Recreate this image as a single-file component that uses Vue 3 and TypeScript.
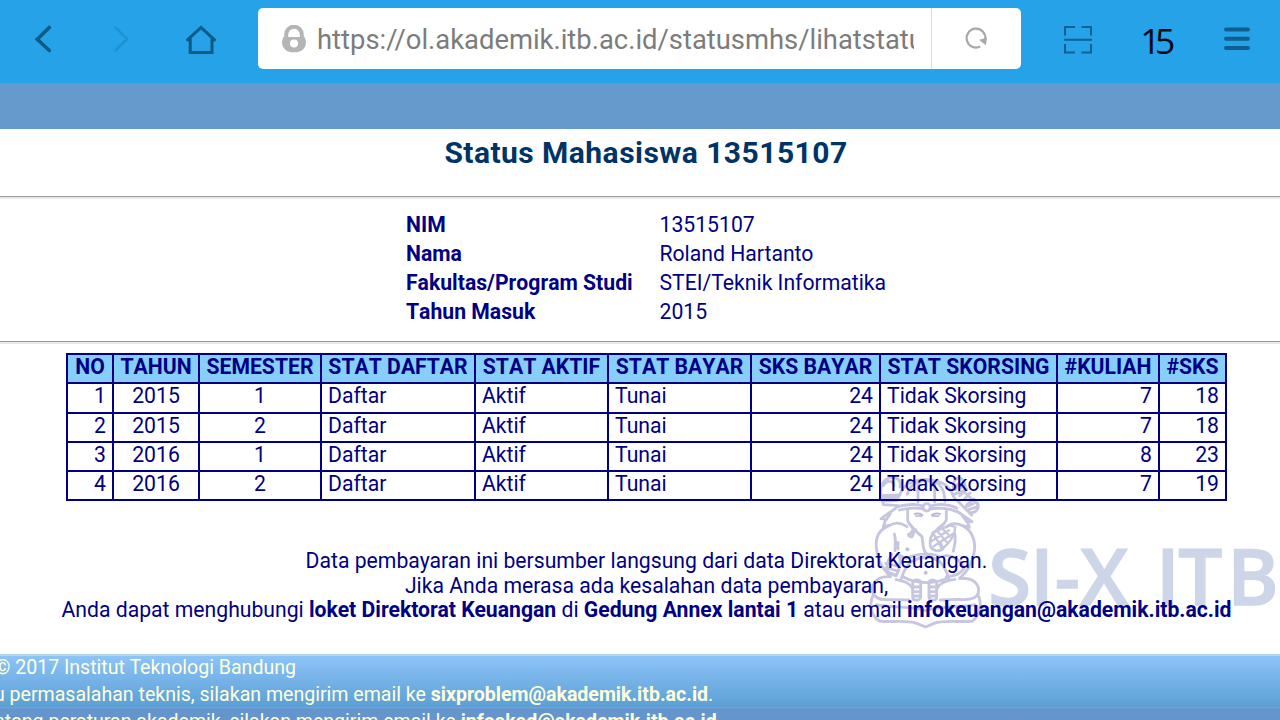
<script setup lang="ts">
interface Field {
  label: string
  value: string
}

interface Column {
  title: string
  kind: string
  align: string
}

const fields: Field[] = [
  { label: 'NIM', value: '13515107' },
  { label: 'Nama', value: 'Roland Hartanto' },
  { label: 'Fakultas/Program Studi', value: 'STEI/Teknik Informatika' },
  { label: 'Tahun Masuk', value: '2015' },
]

const columns: Column[] = [
  { title: 'NO', kind: 'no', align: 'right' },
  { title: 'TAHUN', kind: 'tahun', align: 'center' },
  { title: 'SEMESTER', kind: 'semester', align: 'center' },
  { title: 'STAT DAFTAR', kind: 'daftar', align: 'left' },
  { title: 'STAT AKTIF', kind: 'aktif', align: 'left' },
  { title: 'STAT BAYAR', kind: 'bayar', align: 'left' },
  { title: 'SKS BAYAR', kind: 'sks-bayar', align: 'right' },
  { title: 'STAT SKORSING', kind: 'skorsing', align: 'left' },
  { title: '#KULIAH', kind: 'kuliah', align: 'right' },
  { title: '#SKS', kind: 'sks', align: 'right' },
]

const rows: string[][] = [
  ['1', '2015', '1', 'Daftar', 'Aktif', 'Tunai', '24', 'Tidak Skorsing', '7', '18'],
  ['2', '2015', '2', 'Daftar', 'Aktif', 'Tunai', '24', 'Tidak Skorsing', '7', '18'],
  ['3', '2016', '1', 'Daftar', 'Aktif', 'Tunai', '24', 'Tidak Skorsing', '8', '23'],
  ['4', '2016', '2', 'Daftar', 'Aktif', 'Tunai', '24', 'Tidak Skorsing', '7', '19'],
]
</script>

<template>
  <div class="screen">
    <header class="toolbar">
      <svg class="nav-icons" width="258" height="83" viewBox="0 0 258 83" fill="none" stroke-linecap="round">
        <path d="M49.300 27.500 37.300 39.200 49.300 50.500" stroke="#0b5b86" stroke-width="3.600" />
        <path d="M115.500 27.500 127 39 115.500 50.500" stroke="#1e90d0" stroke-width="2.200" />
        <path d="M187.500 39.800 201 27.500 214.500 39.800M190.200 39V52.400H212V39" stroke="#075a84" stroke-width="3" />
      </svg>
      <div class="address">
        <svg class="lock" width="26" height="28" viewBox="0 0 26 28">
          <path d="M5.200 14V9.500a7.800 7.800 0 0 1 15.600 0V14" fill="none" stroke="#b5b5b5" stroke-width="4" />
          <path d="M2.500 12h21a12 12 0 0 1 1.500 5c0 7-5 10.300-12 10.300S1 24 1 17a12 12 0 0 1 1.500-5Z" fill="#b5b5b5" />
          <circle cx="13" cy="18.500" r="4" fill="#fff" />
        </svg>
        <div class="url">https://ol.akademik.itb.ac.id/statusmhs/lihatstatu</div>
        <div class="reload">
          <svg width="24" height="24" viewBox="0 0 24 24">
            <path d="M16.200 19.500A9.400 9.400 0 1 1 21.300 12.500" fill="none" stroke="#a8a8a8" stroke-width="2.200" />
            <path d="M15 12.800 23 10.700 21.800 18.300Z" fill="#a8a8a8" />
          </svg>
        </div>
      </div>
      <svg class="scan" width="28" height="28" viewBox="0 0 28 28" fill="none" stroke="#0f6092" stroke-width="2">
        <path d="M1 9.500V1H11M17.500 1H27V9.500M1 18V26.500H11M17.500 26.500H27V18M0 13.700H28" />
      </svg>
      <div class="tabs">15</div>
      <svg class="menu" width="26" height="24" viewBox="0 0 26 24" stroke="#0f5e8d" stroke-width="4" stroke-linecap="round">
        <path d="M2 2.500H24M2 11.700H24M2 21H24" />
      </svg>
    </header>
    <div class="band"></div>

    <main class="page">
      <svg class="watermark" width="420" height="175" viewBox="0 0 1260 525">
        <g fill="none" stroke="#c6c6df" stroke-width="8.500" stroke-linejoin="round" stroke-linecap="round">
          <path d="M64 92C56 58 75 35 104 38C118 42 123 53 120 66M70 62C81 45 98 45 102 62M64 92 118 90M65 99 116 97M66 108 112 106M64 92 70 119 114 122" />
          <path d="M119 91C127 62 156 44 198 43C244 44 272 65 280 94M142 88C147 69 160 55 176 47M174 111V57C180 44 213 42 224 58V111M255 109C253 76 244 61 226 49" />
          <path d="M115 124C145 117 171 117 189 123M211 123C233 117 262 116 290 129M118 135C142 129 169 128 192 132M209 132C232 128 267 129 290 140" />
          <circle cx="200" cy="127" r="11" />
          <path d="M280 72C278 41 296 30 309 46C318 58 317 72 310 80M287 74C290 52 304 51 304 68M280 89 309 78 355 120M283 98 335 150M299 92 320 72M313 103 330 84M321 119 342 102M332 143C350 144 361 127 351 113M318 125 339 117M326 134 349 126" />
          <path d="M115 124 63 161 77 163 70 185 89 181C105 171 124 173 141 185M290 138 336 170 322 171 328 187 310 183C290 173 271 175 258 187M91 146 80 163M307 152 321 171" />
          <path d="M143 136V166C146 181 158 184 165 196L186 215C190 230 185 256 202 268L217 277M259 137V162C256 182 238 182 229 196C212 209 208 226 211 243C218 259 237 262 249 251L242 235" />
          <path d="M146 173C157 185 164 195 159 210C156 219 147 216 145 208C157 210 153 190 167 194" />
          <path d="M89 181C57 193 46 219 49 247C50 276 66 309 91 335M310 183C338 199 347 230 343 258C339 291 323 319 299 340M103 207C109 225 105 240 105 257M114 232V252M284 206C289 225 283 243 280 259" />
          <path d="M219 202 268 181 286 186C285 212 269 234 246 252M218 202 246 251M230 196 262 234M246 190 275 219M214 229 267 196M221 244 281 205" stroke-width="7" />
          <path d="M96 268C83 285 76 307 84 322L108 332C117 318 124 291 118 270L138 280 164 271C190 265 224 266 240 276L260 271C283 274 307 290 311 311C301 328 276 334 259 335" />
          <path d="M77 295 117 304M80 309 114 318M85 322 109 332M164 286C182 274 211 271 234 287M123 343C132 314 145 291 170 282M230 280C250 299 260 316 268 345M132 337C168 358 231 358 265 337" />
          <path d="M91 335C55 333 34 352 38 379C42 397 57 405 82 404M108 344C134 348 149 354 157 369M299 340C339 337 360 357 355 383C350 402 327 406 296 403M285 343C259 346 240 353 232 369" />
          <path d="M158 353C157 344 178 341 182 352V397C178 409 158 408 158 397ZM207 353C210 341 230 344 230 353V398C229 408 209 408 207 397ZM160 366H182M160 380H182M160 393H182M207 366H230M207 380H230M207 393H230" />
          <path d="M82 404 147 405M241 405 296 403M39 391C27 418 32 453 58 468C92 473 139 464 170 475L197 486 222 475C253 464 303 473 338 468C363 448 365 414 355 391M49 419C91 430 143 421 197 437C248 421 302 430 345 419" />
        </g>
        <g class="face">
          <path d="M162 148Q175 141 189 151M214 151Q228 141 242 148M166 153H188M215 153H238" />
        </g>
        <g class="dots">
          <circle cx="142" cy="253" r="6" /><circle cx="197" cy="323" r="6" />
        </g>
        <text class="mark-text" x="385 510 584 660 800 888 955 1102" y="421">SI-X ITB</text>
      </svg>

      <h1 class="title">Status Mahasiswa 13515107</h1>
      <hr class="rule" />
      <dl class="info">
        <template v-for="field in fields" :key="field.label">
          <dt>{{ field.label }}</dt>
          <dd>{{ field.value }}</dd>
        </template>
      </dl>
      <hr class="rule" />
      <table class="status">
        <colgroup>
          <col v-for="column in columns" :key="column.kind" :class="column.kind" />
        </colgroup>
        <thead>
          <tr>
            <th v-for="column in columns" :key="column.kind">{{ column.title }}</th>
          </tr>
        </thead>
        <tbody>
          <tr v-for="row in rows" :key="row[0]">
            <td v-for="(cell, i) in row" :key="columns[i].kind" :class="columns[i].align">{{ cell }}</td>
          </tr>
        </tbody>
      </table>
      <div class="notes">
        <p>Data pembayaran ini bersumber langsung dari data Direktorat Keuangan.</p>
        <p>Jika Anda merasa ada kesalahan data pembayaran,</p>
        <p>Anda dapat menghubungi <b>loket Direktorat Keuangan</b> di <b>Gedung Annex lantai 1</b> atau email <b>infokeuangan@akademik.itb.ac.id</b></p>
      </div>
    </main>

    <footer class="footer">
      <p class="copyright">© 2017 Institut Teknologi Bandung</p>
      <p class="technical">u permasalahan teknis, silakan mengirim email ke <b>sixproblem@akademik.itb.ac.id</b>.</p>
      <p class="academic">ntang peraturan akademik, silakan mengirim email ke <b>infoakad@akademik.itb.ac.id</b>.</p>
    </footer>
  </div>
</template>

<style>
body {
  margin: 0;
  overflow: hidden;
}
</style>

<style scoped>
.screen {
  width: 1280px;
  height: 720px;
  overflow: hidden;
  display: flex;
  flex-direction: column;
  background: #fff;
  color: #000084;
  font-family: Roboto, "Liberation Sans", sans-serif;
  font-size: 21.180px;
}
.toolbar {
  flex: none;
  height: 83px;
  display: flex;
  align-items: flex-start;
  background: #25a2e8;
}
.nav-icons {
  flex: none;
}
.address {
  flex: none;
  width: 763px;
  height: 61px;
  margin-top: 8px;
  display: flex;
  background: #fff;
  border-radius: 5px;
}
.lock {
  flex: none;
  margin: 17px 0 0 23px;
}
.url {
  width: 597px;
  margin-left: 10px;
  overflow: hidden;
  white-space: nowrap;
  font-size: 27.400px;
  line-height: 64px;
  color: #7c7c7c;
}
.reload {
  flex: 1;
  margin-left: 17px;
  border-left: 1px solid #dedede;
}
.reload svg {
  display: block;
  margin: 19px 0 0 32px;
}
.scan {
  flex: none;
  margin: 26px 0 0 43px;
}
.tabs {
  width: 64px;
  margin-left: 31px;
  font-family: "Open Sans", "Liberation Sans", sans-serif;
  font-size: 35.500px;
  line-height: 80px;
  letter-spacing: -5.500px;
  text-align: center;
  color: #060a12;
}
.menu {
  flex: none;
  margin: 27px 0 0 37px;
}
.band {
  flex: none;
  height: 46px;
  background: #6699cc;
}
.page {
  flex: none;
  position: relative;
  height: 525px;
}
.watermark {
  position: absolute;
  left: 860px;
  top: 336px;
}
.face {
  fill: none;
  stroke: #b3b3d2;
  stroke-width: 5;
}
.dots {
  fill: #c0c0dc;
}
.mark-text {
  font-family: "Open Sans", "Noto Sans", sans-serif;
  font-size: 234px;
  font-weight: 600;
  fill: #ccd6e8;
  stroke: #ccd6e8;
  stroke-width: 4;
}
.title {
  position: relative;
  margin: 0;
  padding: 6px 0 25px 12px;
  font-size: 30px;
  line-height: 36px;
  font-weight: 700;
  letter-spacing: 0.460px;
  text-align: center;
  color: #003366;
}
.rule {
  height: 1px;
  margin: 0;
  border: 0;
  border-bottom: 2px solid #e8e8e8;
  background: #999;
}
.info {
  display: grid;
  grid-template-columns: 253.500px auto;
  grid-auto-rows: 29px;
  width: max-content;
  margin: 0 0 0 406px;
  padding: 11px 0 14px;
  line-height: 29px;
}
.info dt {
  font-weight: 700;
  font-kerning: none;
}
.info dd {
  margin: 0;
}
.info + .rule {
  margin-top: 1px;
}
.status {
  position: relative;
  width: 1161px;
  margin: 9px 0 0 66px;
  border-collapse: collapse;
  table-layout: fixed;
}
.status th,
.status td {
  height: 24.300px;
  box-sizing: content-box;
  padding: 0 6px 3px;
  border: 2px solid #000080;
  line-height: 24px;
  white-space: nowrap;
  text-align: left;
}
.status th {
  padding: 0 0 3px;
  background: #87cefa;
  font-weight: 700;
  font-kerning: none;
  text-align: center;
}
.status td.right {
  text-align: right;
}
.status td.center {
  text-align: center;
}
.no { width: 46px; }
.tahun { width: 86px; }
.semester { width: 122px; }
.daftar { width: 154px; }
.aktif { width: 133px; }
.bayar { width: 143px; }
.sks-bayar { width: 129px; }
.skorsing { width: 177px; }
.kuliah { width: 102px; }
.sks { width: 67px; }
.notes {
  position: relative;
  margin-top: 48px;
  padding-left: 13px;
  line-height: 24.500px;
  text-align: center;
  white-space: nowrap;
}
.notes p,
.footer p {
  margin: 0;
}
.footer {
  flex: none;
  height: 66px;
  overflow: hidden;
  box-sizing: border-box;
  border-top: 2px solid #b4d4f0;
  background: linear-gradient(#8cc4f8, #5c9fd4 51px, #6fa2d8 51px, #6fa2d8 52px, #6495cc 53px);
  color: #ffffdc;
  font-size: 19.560px;
  line-height: 27px;
  white-space: nowrap;
}
.footer .copyright {
  margin: -2px 0 0 -5px;
}
.footer .technical {
  margin-left: -6px;
}
.footer .academic {
  margin-left: -6px;
}
</style>
